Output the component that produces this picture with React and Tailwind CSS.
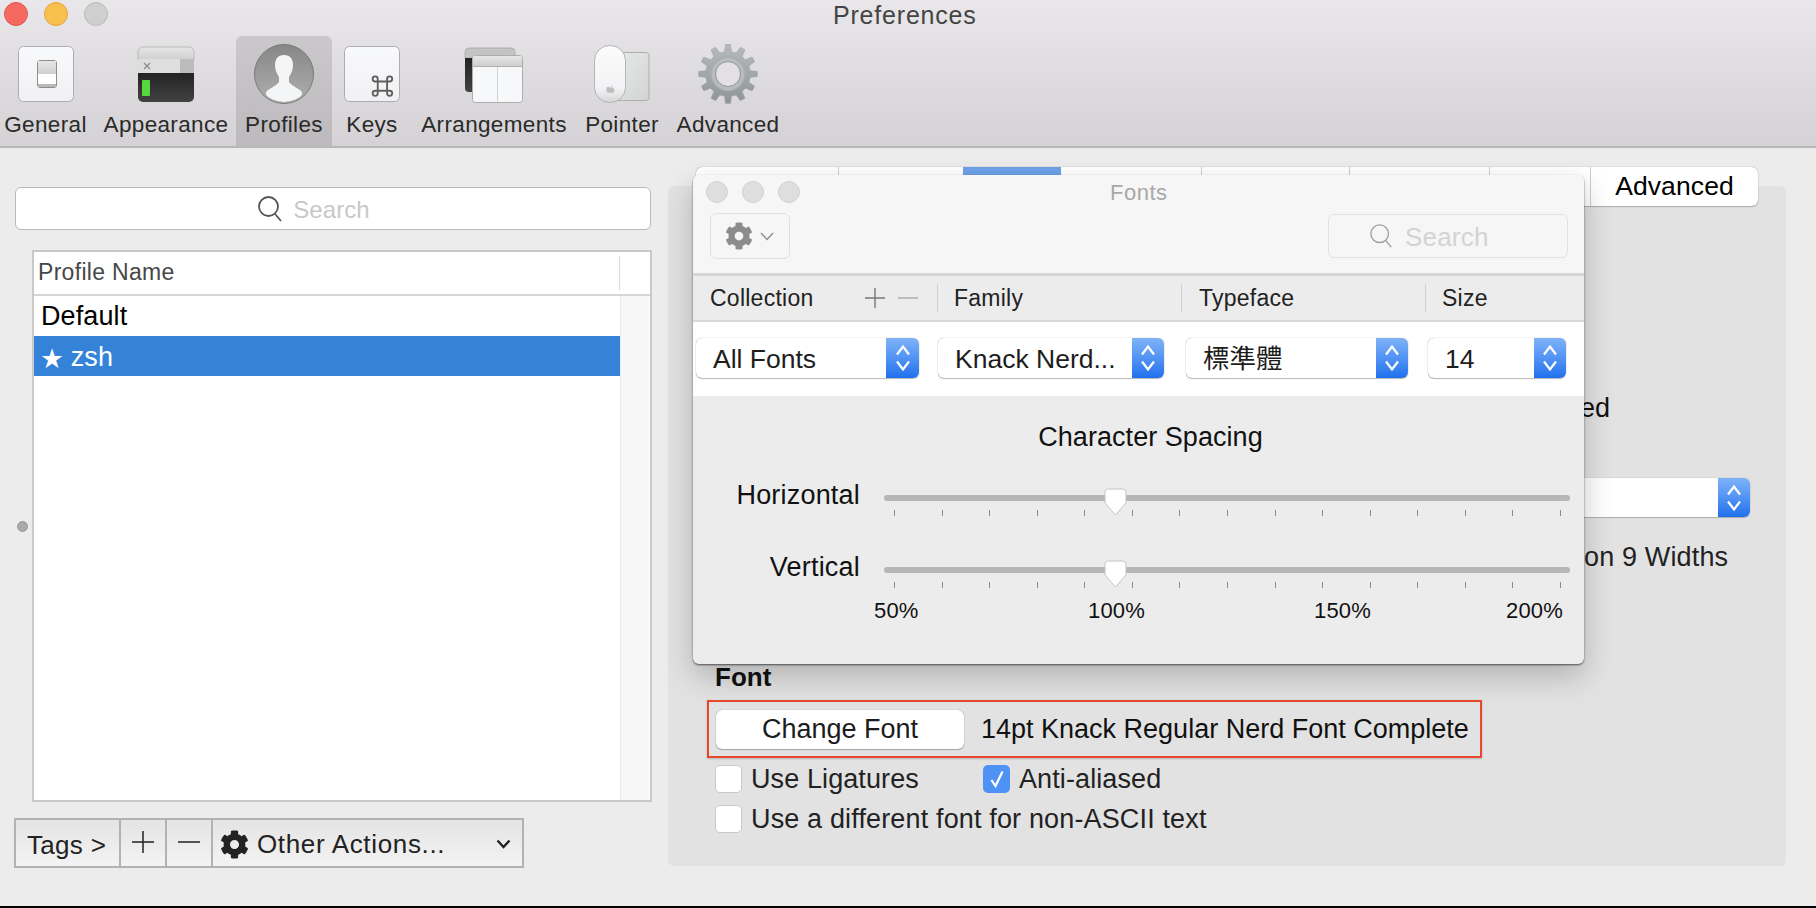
import React from "react";
import { FaCog } from "react-icons/fa";

const gearPath = (cx, cy, rOut, rIn, teeth) => {
  const pts = [];
  for (let i = 0; i < teeth; i++) {
    const a = (i / teeth) * Math.PI * 2 - Math.PI / 2;
    const s = (Math.PI * 2) / teeth;
    const add = (r, t) => pts.push(`${(cx + r * Math.cos(t)).toFixed(2)} ${(cy + r * Math.sin(t)).toFixed(2)}`);
    add(rIn, a - s * 0.3);
    add(rOut, a - s * 0.17);
    add(rOut, a + s * 0.17);
    add(rIn, a + s * 0.3);
  }
  return "M" + pts.join("L") + "Z";
};

const Defs = () => (
  <svg width="0" height="0" className="absolute">
    <defs>
      <linearGradient id="keyg" x1="0" y1="0" x2="0" y2="1"><stop offset="0" stopColor="#f8f9fb" /><stop offset="1" stopColor="#f1f1f4" /></linearGradient>
      <linearGradient id="greyg" x1="0" y1="0" x2="0" y2="1"><stop offset="0" stopColor="#e6e6e6" /><stop offset="1" stopColor="#cfcfcf" /></linearGradient>
      <linearGradient id="darkg" x1="0" y1="0" x2="0" y2="1"><stop offset="0" stopColor="#232323" /><stop offset="1" stopColor="#424242" /></linearGradient>
      <linearGradient id="avag" x1="0" y1="0" x2="0" y2="1"><stop offset="0" stopColor="#868686" /><stop offset="1" stopColor="#b0b0b0" /></linearGradient>
      <linearGradient id="gearg" x1="0" y1="0" x2="0" y2="1"><stop offset="0" stopColor="#b5babb" /><stop offset="1" stopColor="#8f9597" /></linearGradient>
      <linearGradient id="padg" x1="0" y1="0" x2="1" y2="1"><stop offset="0" stopColor="#e8e9e9" /><stop offset="1" stopColor="#d2d4d3" /></linearGradient>
      <linearGradient id="mouseg" x1="0" y1="0" x2="0" y2="1"><stop offset="0" stopColor="#fbfbfc" /><stop offset="0.75" stopColor="#f3f3f5" /><stop offset="1" stopColor="#d5d5d7" /></linearGradient>
    </defs>
  </svg>
);

const GeneralIcon = () => (
  <svg width="60" height="60" viewBox="0 0 60 60">
    <rect x="2.5" y="2.5" width="55" height="55" rx="5" fill="url(#keyg)" stroke="#adadad" />
    <rect x="21.5" y="16.5" width="19" height="27" rx="2.5" fill="#fff" stroke="#8d8d8d" />
    <rect x="22" y="17" width="18" height="13" fill="url(#greyg)" />
    <rect x="22" y="40" width="18" height="3" fill="#b9b9b9" />
  </svg>
);
const AppearanceIcon = () => (
  <svg width="60" height="60" viewBox="0 0 60 60">
    <path d="M2 8a5 5 0 0 1 5-5h46a5 5 0 0 1 5 5v8H2z" fill="url(#greyg)" stroke="#b0b0b0" strokeWidth="0.8" />
    <rect x="2" y="15" width="56" height="14" fill="#dedede" />
    <rect x="44" y="15" width="14" height="14" fill="#bcbcbc" />
    <path d="M8 19l6 6M14 19l-6 6" stroke="#8a8a8a" strokeWidth="1.2" />
    <path d="M2 29h56v24a5 5 0 0 1-5 5H7a5 5 0 0 1-5-5z" fill="url(#darkg)" />
    <rect x="6" y="36" width="8" height="16" rx="1" fill="#57d63f" />
  </svg>
);
const ProfileIcon = () => (
  <svg width="60" height="60" viewBox="0 0 60 60">
    <clipPath id="avc"><circle cx="30" cy="30" r="28" /></clipPath>
    <circle cx="30" cy="30" r="29.5" fill="url(#avag)" stroke="#7a7a7a" />
    <g clipPath="url(#avc)">
      <path d="M30 11c6 0 9 4 9 10 0 5-2 9-4 12v5c3 4 9 6 12 9 2 2 1 5-2 7-4 3-10 4-15 4s-11-1-15-4c-3-2-4-5-2-7 3-3 9-5 12-9v-5c-2-3-4-7-4-12 0-6 3-10 9-10z" fill="#f4f5f6" />
    </g>
  </svg>
);
const KeysIcon = () => (
  <svg width="60" height="60" viewBox="0 0 60 60">
    <rect x="2.5" y="2.5" width="55" height="55" rx="5" fill="url(#keyg)" stroke="#adadad" />
    <path d="M35 37h-3a3 3 0 1 1 3-3v17a3 3 0 1 1-3-3h17a3 3 0 1 1-3 3V34a3 3 0 1 1 3 3z" transform="translate(6 6) scale(0.85)" fill="none" stroke="#5f5f5f" strokeWidth="2.2" />
  </svg>
);
const ArrangeIcon = () => (
  <svg width="60" height="60" viewBox="0 0 60 60">
    <path d="M1 8a4 4 0 0 1 4-4h42a4 4 0 0 1 4 4v6H1z" fill="#c4c4c4" stroke="#a2a2a2" strokeWidth="0.7" />
    <path d="M1 14h50v30a4 4 0 0 1-4 4H5a4 4 0 0 1-4-4z" fill="url(#darkg)" />
    <rect x="8.5" y="11.5" width="50" height="47" rx="3" fill="#f7f8fa" stroke="#adadad" />
    <path d="M9 22V14a2 2 0 0 1 2-2h45a2 2 0 0 1 2 2v8z" fill="url(#greyg)" />
    <path d="M9 22.5h49" stroke="#b0b0b0" />
    <path d="M33.5 23v35" stroke="#d2d2d2" />
  </svg>
);
const PointerIcon = () => (
  <svg width="60" height="60" viewBox="0 0 60 60">
    <rect x="22" y="8.5" width="35" height="48" rx="3" fill="url(#padg)" stroke="#aeaeae" />
    <rect x="2.5" y="1.5" width="31" height="57" rx="15" fill="url(#mouseg)" stroke="#b5b5b5" />
    <path d="M18.5 44.5c1-1.6 2.4-1 3.2-.8-.3.9.2 1.8 1 2.2-.5 1.6-1.4 3-2.4 3-.8 0-1.2-.5-2-.5s-1.2.5-2 .5c-1.4 0-2.8-4-1.4-5.6 1.2-1.2 2.6-.3 3.6.2z" fill="#bdbdbd" />
    <path d="M18.7 43.3c0-1 .7-1.8 1.6-2 .1 1-.6 1.9-1.6 2z" fill="#bdbdbd" />
  </svg>
);
const AdvancedIcon = () => (
  <svg width="60" height="60" viewBox="0 0 60 60">
    <path d={gearPath(30, 30, 29.5, 22.5, 12)} fill="url(#gearg)" stroke="#9ba0a2" strokeWidth="0.5" />
    <circle cx="30" cy="30" r="17.5" fill="#a9aeb0" />
    <circle cx="30" cy="30" r="16" fill="#b9bdbf" />
    <circle cx="30" cy="30" r="12.5" fill="#e2e0e2" stroke="#8e9395" strokeWidth="1" />
  </svg>
);

const toolbar = [
  { label: "General", Icon: GeneralIcon, cls: "w-[91px]" },
  { label: "Appearance", Icon: AppearanceIcon, cls: "w-[136px] ml-[7px]" },
  { label: "Profiles", Icon: ProfileIcon, cls: "w-[96px] ml-[2px] rounded-t-[6px] bg-gradient-to-b from-[#cac8ca] to-[#bcbabc]" },
  { label: "Keys", Icon: KeysIcon, cls: "w-[80px]" },
  { label: "Arrangements", Icon: ArrangeIcon, cls: "w-[164px]" },
  { label: "Pointer", Icon: PointerIcon, cls: "w-[84px] ml-[4px]" },
  { label: "Advanced", Icon: AdvancedIcon, cls: "w-[112px] ml-[8px]" },
];

const Lights = ({ colors, cls }) => (
  <div className="flex">
    {colors.map((c, i) => (
      <div key={i} className={cls} style={{ background: c[0], borderColor: c[1] }} />
    ))}
  </div>
);

const Stepper = ({ w }) => (
  <div className={`${w} h-full rounded-r-[6px] bg-gradient-to-b from-[#7fb3f8] to-[#1f70ee] flex items-center justify-center`}>
    <svg width="16" height="28" viewBox="0 0 16 28" fill="none" stroke="#fff" strokeWidth="2.2">
      <path d="M2 10.500 8 2.500 14 10.500M2 17.500 8 25.500 14 17.500" />
    </svg>
  </div>
);

const Select = ({ text, cls, stepW, ml }) => (
  <div className={`${cls} ${ml} h-[40px] flex bg-white rounded-[6px] shadow-[0_0_1px_rgba(0,0,0,0.45),0_1px_1px_rgba(0,0,0,0.25)]`}>
    <div className="flex-1 pl-[17px] leading-[42px] text-[26.5px] text-[#1d1d1d] whitespace-nowrap overflow-hidden">{text}</div>
    <Stepper w={stepW} />
  </div>
);

const Slider = ({ label, cls }) => (
  <div className={`flex h-[36px] ${cls}`}>
    <div className="w-[169px] pr-[2px] text-right leading-[30px] text-[27px] tracking-[0.2px] text-[#111]">{label}</div>
    <div className="relative ml-[22px] w-[686px]">
      <div className="mt-[15px] h-[6px] rounded-[3px] bg-[#b6b6b6]" />
      <div className="mt-[9px] ml-[10px] w-[667px] flex justify-between">
        {Array.from({ length: 15 }).map((_, i) => (
          <div key={i} className="w-[1px] h-[6px] bg-[#8a8a8a]" />
        ))}
      </div>
      <svg className="absolute left-[220px] top-[8px]" width="23" height="28" viewBox="0 0 23 28">
        <path d="M1 4a3 3 0 0 1 3-3h15a3 3 0 0 1 3 3v11l-10.5 12L1 15z" fill="#fff" stroke="#c4c4c4" />
      </svg>
    </div>
  </div>
);

const Check = ({ checked }) => (
  <div className={`w-[27px] h-[28px] rounded-[5px] flex items-center justify-center ${checked ? "bg-[#4d92f4]" : "bg-white border border-[#c9c9c9]"}`}>
    {checked && (
      <svg width="16" height="20" viewBox="0 0 16 20" fill="none" stroke="#fff" strokeWidth="2.2">
        <path d="M2.5 11 6.500 17 13.500 2.500" />
      </svg>
    )}
  </div>
);

const Tab = ({ cls, children }) => <div className={`h-full flex items-center justify-center ${cls}`}>{children}</div>;

export default function App() {
  return (
    <div className="relative w-[1816px] h-[908px] overflow-hidden flex flex-col bg-[#ececec] font-['Liberation_Sans','Noto_Sans_CJK_TC',sans-serif] text-[#111]">
      <Defs />
      {/* Title bar and toolbar */}
      <div className="h-[148px] shrink-0 border-b-2 border-[#b9b7b9] bg-gradient-to-b from-[#e9e7e9] to-[#d4d2d4]">
        <div className="flex h-[36px]">
          <div className="mt-[2px] ml-[4px]">
            <Lights
              cls="w-[24px] h-[24px] rounded-full border mr-[16px]"
              colors={[["#f56a60", "#e2554c"], ["#fac04e", "#e3a53a"], ["#d0cfcf", "#bcbbbb"]]}
            />
          </div>
          <div className="ml-[709px] text-[25px] leading-[30px] tracking-[0.8px] text-[#444]">Preferences</div>
        </div>
        <div className="flex h-[110px]">
          {toolbar.map(({ label, Icon, cls }) => (
            <div key={label} className={`flex flex-col items-center ${cls}`}>
              <div className="h-[68px] pt-[8px] flex justify-center"><Icon /></div>
              <div className="text-[22.500px] leading-[42px] tracking-[0.35px] text-[#2a2a2a] whitespace-nowrap">{label}</div>
            </div>
          ))}
        </div>
      </div>

      <div className="flex h-[758px] shrink-0">
        {/* Left column */}
        <div className="w-[668px] shrink-0 pt-[39px]">
          <div className="ml-[15px] w-[636px] h-[43px] rounded-[6px] border border-[#b9b9b9] bg-white flex items-center justify-center pr-[26px]">
            <svg className="ml-[-13px]" width="28" height="28" viewBox="0 0 28 28" fill="none" stroke="#555" strokeWidth="1.8">
              <circle cx="11.500" cy="11.500" r="9.500" />
              <path d="M18 19l6 7" />
            </svg>
            <span className="ml-[8px] pt-[2px] text-[24px] tracking-[0.1px] text-[#c8c8c8]">Search</span>
          </div>
          <div className="mt-[20px] ml-[17px] flex items-center">
            <div className="w-[11px] h-[11px] rounded-full bg-[#a9a9a9] border border-[#9a9a9a]" />
            <div className="ml-[4px] w-[620px] h-[552px] border-2 border-[#c9c9c9] bg-white flex flex-col">
              <div className="h-[44px] shrink-0 flex border-b-2 border-[#d6d6d6]">
                <div className="w-[585px] pl-[4px] text-[23px] leading-[40px] tracking-[0.3px] text-[#474747]">Profile Name</div>
                <div className="w-[1px] mt-[4px] h-[34px] bg-[#d9d9d9]" />
              </div>
              <div className="flex flex-1">
                <div className="w-[586px]">
                  <div className="h-[40px] pl-[7px] text-[27px] leading-[41px] tracking-[0.1px] text-black">Default</div>
                  <div className="h-[40px] pl-[7px] text-[27px] leading-[42px] tracking-[0.1px] bg-[#3583d8] text-white whitespace-nowrap"><span className="text-[22px]">★</span> zsh</div>
                </div>
                <div className="flex-1 bg-[#f7f7f7] border-l border-[#ececec] mr-[1px]" />
              </div>
            </div>
          </div>
          <div className="mt-[16px] ml-[14px] w-[510px] h-[50px] flex border-2 border-[#b2b2b2] bg-gradient-to-b from-[#e4e4e4] to-[#f3f3f3] text-[#222]">
            <div className="w-[103px] pl-[11px] text-[26px] leading-[50px] tracking-[0.3px]">Tags &gt;</div>
            <div className="w-[46px] border-l-2 border-[#b2b2b2] flex items-start justify-center pt-[10px]">
              <svg width="24" height="24" viewBox="0 0 24 24" stroke="#222" strokeWidth="1.5"><path d="M12 1v22M1 12h22" /></svg>
            </div>
            <div className="w-[46px] border-l-2 border-[#b2b2b2] flex items-start justify-center pt-[10px]">
              <svg width="24" height="24" viewBox="0 0 24 24" stroke="#222" strokeWidth="1.5"><path d="M1 12h22" /></svg>
            </div>
            <div className="flex-1 border-l-2 border-[#b2b2b2] flex items-center pl-[7px] pt-[2px]">
              <FaCog className="w-[29px] h-[29px] text-[#222]" />
              <span className="ml-[8px] text-[26px] tracking-[0.65px] whitespace-nowrap">Other Actions...</span>
              <svg className="ml-[51px]" width="15" height="10" viewBox="0 0 15 10" fill="none" stroke="#222" strokeWidth="2.4"><path d="M1.500 1.500 7.500 8l6-6.500" /></svg>
            </div>
          </div>
        </div>

        {/* Right panel */}
        <div className="relative mt-[38px] w-[1118px] h-[680px] rounded-[6px] bg-[#e2e2e2]">
          <div className="-mt-[19px] ml-[28px] w-[1062px] h-[39px] flex rounded-[6px] bg-white shadow-[0_0_1px_rgba(0,0,0,0.5),0_1px_1px_rgba(0,0,0,0.2)] overflow-hidden">
            <Tab cls="w-[143px] border-r border-[#cfcfcf]" />
            <Tab cls="w-[124px]" />
            <Tab cls="w-[98px] bg-[#6ea2ea]" />
            <Tab cls="w-[141px] border-r border-[#cfcfcf]" />
            <Tab cls="w-[148px] border-r border-[#cfcfcf]" />
            <Tab cls="w-[140px] border-r border-[#cfcfcf]" />
            <Tab cls="w-[101px] border-r border-[#cfcfcf]" />
            <Tab cls="flex-1 text-[26.500px] tracking-[0.1px] text-black">Advanced</Tab>
          </div>
          <div className="mt-[187px] ml-[912px] h-[30px] text-[27px] leading-[30px]">ed</div>
          <div className="mt-[55px] ml-[872px] w-[210px] h-[39px] flex bg-white rounded-r-[6px] shadow-[0_0_1px_rgba(0,0,0,0.4),0_1px_1px_rgba(0,0,0,0.2)]">
            <div className="flex-1" />
            <Stepper w="w-[32px]" />
          </div>
          <div className="mt-[25px] ml-[916px] h-[30px] text-[27px] leading-[30px] tracking-[0.15px] text-[#222]">on 9 Widths</div>
          <div className="mt-[90px] ml-[47px] h-[30px] text-[26px] leading-[30px] font-bold">Font</div>
          <div className="mt-[8px] ml-[39px] w-[775px] h-[58px] border-2 border-[#e8492e] flex items-center pl-[7px] shadow-[0_1px_2px_rgba(0,0,0,0.2)]">
            <div className="w-[248px] h-[39px] rounded-[6px] bg-white shadow-[0_0_1px_rgba(0,0,0,0.45),0_1px_1px_rgba(0,0,0,0.25)] text-center text-[27px] leading-[39px] text-[#1c1c1c]">Change Font</div>
            <div className="ml-[17px] text-[27px] text-[#111] whitespace-nowrap">14pt Knack Regular Nerd Font Complete</div>
          </div>
          <div className="mt-[7px] ml-[47px] h-[28px] flex items-center text-[27px] tracking-[0.1px] text-[#222]">
            <Check />
            <span className="ml-[9px] w-[232px]">Use Ligatures</span>
            <Check checked />
            <span className="ml-[9px]">Anti-aliased</span>
          </div>
          <div className="mt-[12px] ml-[47px] h-[28px] flex items-center text-[27px] tracking-[0.15px] text-[#222]">
            <Check />
            <span className="ml-[9px]">Use a different font for non-ASCII text</span>
          </div>

          {/* Fonts floating window */}
          <div className="absolute left-[25px] -top-[11px] w-[891px] h-[489px] rounded-[6px] overflow-hidden flex flex-col bg-[#ececec] shadow-[0_12px_30px_rgba(0,0,0,0.22),0_1px_2px_rgba(0,0,0,0.6)]">
            <div className="h-[98px] shrink-0 bg-[#f6f6f6] relative">
              <div className="flex pt-[6px] pl-[13px] h-[38px]">
                <Lights
                  cls="w-[22px] h-[22px] rounded-full border mr-[14px]"
                  colors={[["#dedede", "#d2d2d2"], ["#dedede", "#d2d2d2"], ["#dedede", "#d2d2d2"]]}
                />
                <div className="ml-[296px] text-[22px] leading-[24px] tracking-[0.5px] text-[#a8a8a8]">Fonts</div>
              </div>
              <div className="flex justify-between pl-[17px] pr-[16px]">
                <div className="w-[80px] h-[46px] rounded-[6px] border border-[#e0e0e0] flex items-center pl-[14px]">
                  <FaCog className="w-[28px] h-[28px] text-[#8c8c8c]" />
                  <svg className="ml-[7px]" width="14" height="9" viewBox="0 0 14 9" fill="none" stroke="#8c8c8c" strokeWidth="1.4"><path d="M1 1l6 6.500L13 1" /></svg>
                </div>
                <div className="mt-[1px] w-[240px] h-[44px] rounded-[6px] border border-[#e2e2e2] flex items-center pl-[40px]">
                  <svg width="26" height="26" viewBox="0 0 28 28" fill="none" stroke="#a0a0a0" strokeWidth="1.500">
                    <circle cx="11.500" cy="11.500" r="9.500" />
                    <path d="M18 19l6 7" />
                  </svg>
                  <span className="ml-[10px] pt-[2px] text-[26px] tracking-[0.2px] text-[#d3d3d3]">Search</span>
                </div>
              </div>
            </div>
            <div className="h-[3px] shrink-0 bg-[#d6d6d6]" />
            <div className="h-[46px] shrink-0 flex items-center bg-[#ececec] border-b-2 border-[#d8d8d8] text-[23px] tracking-[0.25px] text-[#222]">
              <span className="ml-[17px] w-[153px]">Collection</span>
              <svg width="24" height="24" viewBox="0 0 24 24" stroke="#777" strokeWidth="1.400"><path d="M12 2v20M2 12h20" /></svg>
              <svg className="ml-[9px]" width="24" height="24" viewBox="0 0 24 24" stroke="#aaa" strokeWidth="1.400"><path d="M2 12h20" /></svg>
              <div className="ml-[17px] w-[1px] h-[28px] bg-[#cfcfcf]" />
              <span className="ml-[16px] w-[227px]">Family</span>
              <div className="w-[1px] h-[28px] bg-[#cfcfcf]" />
              <span className="ml-[17px] w-[226px]">Typeface</span>
              <div className="w-[1px] h-[28px] bg-[#cfcfcf]" />
              <span className="ml-[16px]">Size</span>
            </div>
            <div className="h-[74px] shrink-0 bg-white flex pt-[16px] pl-[3px]">
              <Select text="All Fonts" cls="w-[223px]" stepW="w-[33px]" ml="" />
              <Select text="Knack Nerd..." cls="w-[226px]" stepW="w-[32px]" ml="ml-[19px]" />
              <Select text="標準體" cls="w-[222px]" stepW="w-[32px]" ml="ml-[22px]" />
              <Select text="14" cls="w-[138px]" stepW="w-[32px]" ml="ml-[20px]" />
            </div>
            <div className="flex-1 flex flex-col">
              <div className="mt-[26px] h-[30px] text-center text-[27px] leading-[30px] tracking-[0.05px] text-[#111] pl-[24px]">Character Spacing</div>
              <Slider label="Horizontal" cls="mt-[28px]" />
              <Slider label="Vertical" cls="mt-[36px]" />
              <div className="mt-[8px] flex h-[30px] text-[22px] leading-[30px] tracking-[0.2px] text-[#111] whitespace-nowrap">
                <span className="ml-[181px] w-[45px]">50%</span>
                <span className="ml-[169px] w-[51px]">100%</span>
                <span className="ml-[175px] w-[51px]">150%</span>
                <span className="ml-[141px] w-[59px]">200%</span>
              </div>
            </div>
          </div>
        </div>
      </div>
      <div className="h-[2px] shrink-0 bg-black" />
    </div>
  );
}
